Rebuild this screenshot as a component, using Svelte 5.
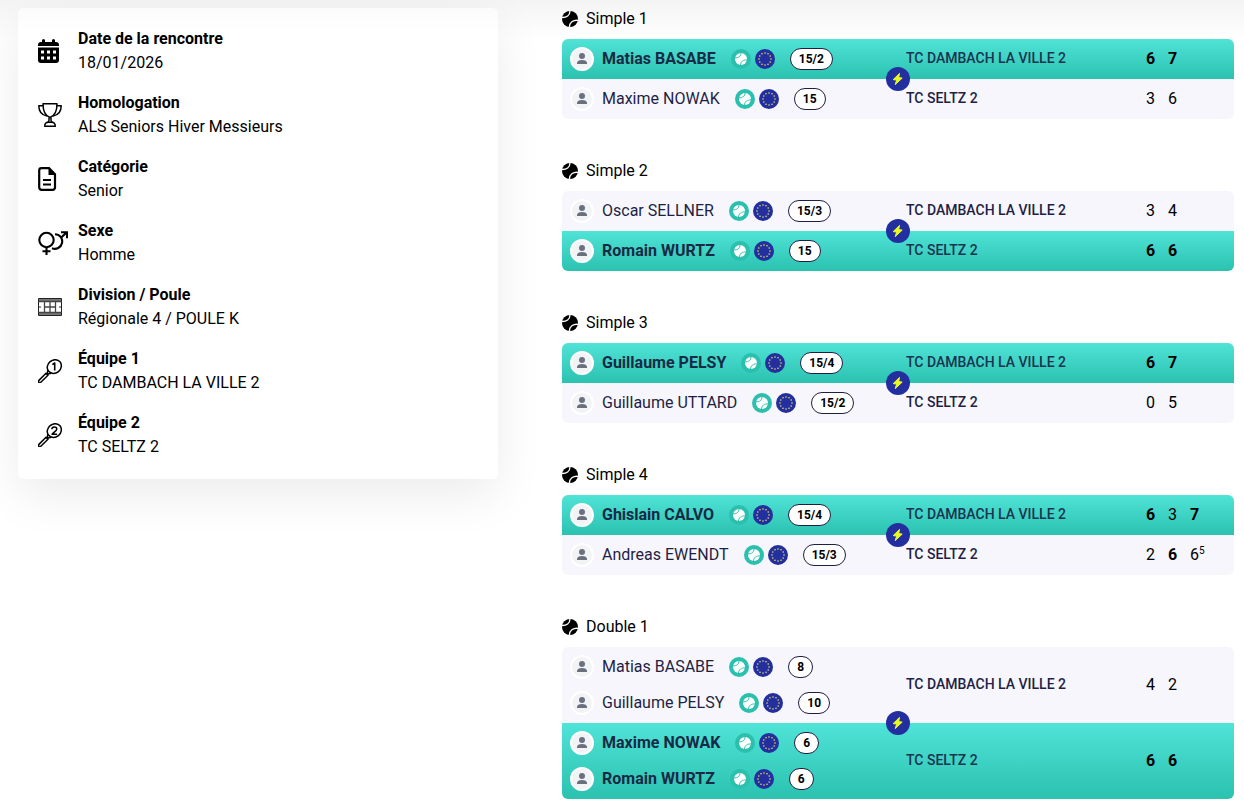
<script>
  const infos = [
    { icon: 'calendar', label: 'Date de la rencontre', value: '18/01/2026' },
    { icon: 'trophy', label: 'Homologation', value: 'ALS Seniors Hiver Messieurs' },
    { icon: 'document', label: 'Catégorie', value: 'Senior' },
    { icon: 'gender', label: 'Sexe', value: 'Homme' },
    { icon: 'court', label: 'Division / Poule', value: 'Régionale 4 / POULE K' },
    { icon: 'racket', number: '1', label: 'Équipe 1', value: 'TC DAMBACH LA VILLE 2' },
    { icon: 'racket', number: '2', label: 'Équipe 2', value: 'TC SELTZ 2' }
  ];

  const home = 'TC DAMBACH LA VILLE 2';
  const away = 'TC SELTZ 2';
  const p = (name, rank) => ({ name, rank });
  const s = (games, won = false, tie = '') => ({ games, won, tie });

  const matches = [
    {
      title: 'Simple 1',
      sides: [
        { team: home, winner: true, players: [p('Matias BASABE', '15/2')], sets: [s(6, true), s(7, true)] },
        { team: away, players: [p('Maxime NOWAK', '15')], sets: [s(3), s(6)] }
      ]
    },
    {
      title: 'Simple 2',
      sides: [
        { team: home, players: [p('Oscar SELLNER', '15/3')], sets: [s(3), s(4)] },
        { team: away, winner: true, players: [p('Romain WURTZ', '15')], sets: [s(6, true), s(6, true)] }
      ]
    },
    {
      title: 'Simple 3',
      sides: [
        { team: home, winner: true, players: [p('Guillaume PELSY', '15/4')], sets: [s(6, true), s(7, true)] },
        { team: away, players: [p('Guillaume UTTARD', '15/2')], sets: [s(0), s(5)] }
      ]
    },
    {
      title: 'Simple 4',
      sides: [
        { team: home, winner: true, players: [p('Ghislain CALVO', '15/4')], sets: [s(6, true), s(3), s(7, true)] },
        { team: away, players: [p('Andreas EWENDT', '15/3')], sets: [s(2), s(6, true), s(6, false, '5')] }
      ]
    },
    {
      title: 'Double 1',
      sides: [
        { team: home, players: [p('Matias BASABE', '8'), p('Guillaume PELSY', '10')], sets: [s(4), s(2)] },
        { team: away, winner: true, players: [p('Maxime NOWAK', '6'), p('Romain WURTZ', '6')], sets: [s(6, true), s(6, true)] }
      ]
    }
  ];

  const stars = Array.from({ length: 12 }, (_, i) => {
    const a = (i * Math.PI) / 6;
    return { x: 10 + 6 * Math.sin(a), y: 10 - 6 * Math.cos(a) };
  });
</script>

{#snippet ball(size, fill, seam)}
  <svg width={size} height={size} viewBox="0 0 16 16" aria-hidden="true">
    <circle cx="8" cy="8" r="8" {fill} />
    <g fill="none" stroke={seam} stroke-width="1.3">
      <path d="M-.2 6.500C4.500 6.700 8 4.500 8 -.2" />
      <path d="M7.400 16.200C7.400 11.500 11 8.800 16.200 9.300" />
    </g>
  </svg>
{/snippet}

{#snippet infoIcon(info)}
  {#if info.icon === 'calendar'}
    <svg width="24" height="24" viewBox="0 0 24 24" aria-hidden="true">
      <path d="M3 3h1V1.500a1.500 1.500 0 0 1 3 0V3h7V1.500a1.500 1.500 0 0 1 3 0V3h1a3 3 0 0 1 3 3v1H0V6a3 3 0 0 1 3-3z" />
      <path fill-rule="evenodd" d="M0 8.500h21V21a3 3 0 0 1-3 3H3a3 3 0 0 1-3-3zM3 11.500v3h3v-3zm6 0v3h3v-3zm6 0v3h3v-3zM3 17.500v3h3v-3zm6 0v3h3v-3zm6 0v3h3v-3z" />
    </svg>
  {:else if info.icon === 'trophy'}
    <svg width="24" height="24" viewBox="0 0 24 24" fill="none" stroke="#000" stroke-width="1.500" stroke-linejoin="round" aria-hidden="true">
      <path d="M5 .8h14c0 7.400-2.400 12.200-7 13.700C7.400 13 5 8.200 5 .8z" />
      <path d="M5 2.700H.8C.8 8.500 3.500 12 9 13M19 2.700h4.200c0 5.800-2.700 9.300-8.200 10.300" />
      <path d="M11 14.500v2.700c0 1-.5 1.700-1.500 2M13 14.500v2.700c0 1 .5 1.700 1.500 2" />
      <path d="M6.700 23.200c0-2.400 1.700-4 3.800-4h3c2.100 0 3.800 1.600 3.800 4z" />
    </svg>
  {:else if info.icon === 'document'}
    <svg width="24" height="24" viewBox="0 0 24 24" aria-hidden="true">
      <path d="M3.500 1.200H11L17 7.200v13.300a2.300 2.300 0 0 1-2.300 2.300H3.500a2.300 2.300 0 0 1-2.300-2.300v-17a2.300 2.300 0 0 1 2.300-2.300z" fill="none" stroke="#000" stroke-width="2.200" />
      <path d="M10.500 1v7H17zM5 12h8v2H5zM5 16.500h8v2H5z" />
    </svg>
  {:else if info.icon === 'gender'}
    <svg width="30" height="24" viewBox="0 0 30 24" fill="none" stroke="#000" stroke-width="2.100" aria-hidden="true">
      <circle cx="8.500" cy="9" r="7.200" />
      <path d="M8.500 16.200V24M4.500 20.300h8" />
      <path d="M17 3.200a7.300 7.300 0 1 1-3 14M23.500 6.300L29 1M23 1.200h6v6" />
    </svg>
  {:else if info.icon === 'court'}
    <svg width="24" height="24" viewBox="0 0 24 24" fill="none" stroke="#222" aria-hidden="true">
      <path d="M1 5h22M1 19h22" stroke="#777" stroke-width="2" />
      <path d="M.5 3.500h23v17H.5z" />
      <path d="M.5 6.500h23M.5 17.500h23M6.500 7v10M17.500 7v10M12 7v10M6.500 12h11" stroke="#444" stroke-width="1.300" />
      <path d="M1 12h2M21 12h2" />
    </svg>
  {:else}
    <svg width="24" height="24" viewBox="0 0 24 24" fill="none" stroke="#000" stroke-width="1.500" stroke-linejoin="round" aria-hidden="true">
      <ellipse cx="16.300" cy="7.600" rx="7.400" ry="6.500" transform="rotate(-40 16.300 7.600)" />
      <path d="M9.700 11.200c.3 1.600-.2 2.800-1.200 4M13.200 14.500c-1.700-.3-3 .2-4.200 1.400M10.300 13.900l-1.600 1.600" />
      <path d="M8 14.200l2 2-7.200 7.100a1.200 1.200 0 0 1-1.900-1.900z" />
      {#if info.number === '1'}
        <path d="M14.400 5.700l2.300-1.700v7.500" stroke-width="1.600" />
      {:else}
        <path d="M13.900 6.200c0-3 4.900-3 4.900-.2 0 1.900-3.200 3.300-4.700 5.300h5" stroke-width="1.500" />
      {/if}
    </svg>
  {/if}
{/snippet}

<main class="page">
  <aside class="card">
    <dl class="infos">
      {#each infos as info}
        <div class="info">
          <span class="info-icon">{@render infoIcon(info)}</span>
          <div>
            <dt>{info.label}</dt>
            <dd>{info.value}</dd>
          </div>
        </div>
      {/each}
    </dl>
  </aside>

  <div class="matches">
    {#each matches as match}
      <section class="match">
        <h2>{@render ball(16, '#000', '#fff')}{match.title}</h2>
        <div class="board">
          {#each match.sides as side, i}
            <div class="side" class:winner={side.winner}>
              <div class="players">
                {#each side.players as player}
                  <div class="player">
                    <svg class="avatar" width="24" height="24" viewBox="0 0 24 24" aria-hidden="true">
                      <circle cx="12" cy="12" r="11" fill="#f2f3f5" stroke="#fff" stroke-width="2" />
                      <circle cx="12" cy="9" r="3" fill="#6a7080" />
                      <path d="M7 17v-1c0-2 2-3 5-3s5 1 5 3v1z" fill="#6a7080" />
                    </svg>
                    <span class="name">{player.name}</span>
                    <span class="badges">
                      <span class="ball-badge">{@render ball(12, '#fff', '#2bbfad')}</span>
                      <svg width="20" height="20" viewBox="0 0 20 20" aria-hidden="true">
                        <circle cx="10" cy="10" r="10" fill="#232f9e" />
                        {#each stars as star}
                          <circle cx={star.x} cy={star.y} r=".8" fill="#e6dc63" />
                        {/each}
                      </svg>
                    </span>
                    <span class="rank">{player.rank}</span>
                  </div>
                {/each}
              </div>
              <div class="team">{side.team}</div>
              <div class="sets">
                {#each side.sets as set}
                  <span class="set" class:won={set.won}>{set.games}{#if set.tie}<sup>{set.tie}</sup>{/if}</span>
                {/each}
              </div>
              {#if i === 1}
                <button class="versus" type="button" aria-label="Face à face">
                  <svg width="24" height="24" viewBox="0 0 24 24" aria-hidden="true">
                    <path d="M13.500 6.400L7.200 12.600l3.500.5-1.500 4.500 7-6.500-3.500-.5z" fill="#e8fb25" stroke="#e8fb25" stroke-linejoin="round" />
                  </svg>
                </button>
              {/if}
            </div>
          {/each}
        </div>
      </section>
    {/each}
  </div>
</main>

<style>
  :global(body) {
    background: linear-gradient(#f4f4f4, #fff 40px) no-repeat #fff;
    color: #000;
    font-family: Roboto, Arial, sans-serif;
    font-size: 16px;
    line-height: 24px;
  }

  .page {
    display: grid;
    grid-template-columns: 5fr 7fr;
    align-items: start;
    gap: 64px;
    padding: 7px 10px 8px 18px;
  }

  .card {
    margin-top: 1px;
    padding: 19px 20px 20px;
    border-radius: 6px;
    background: linear-gradient(#fbfbfb, #fff 24px);
    box-shadow: 0 16px 48px rgba(0, 0, 0, 0.08);
  }

  .infos {
    display: grid;
    gap: 16px;
    margin: 0;
  }

  .info {
    display: flex;
    align-items: center;
    gap: 16px;
  }

  .info-icon {
    display: flex;
    width: 24px;
  }

  .info-icon svg {
    flex: none;
  }

  dt {
    font-weight: 700;
  }

  dd {
    margin: 0;
  }

  .matches {
    display: grid;
    gap: 40px;
  }

  h2 {
    display: flex;
    align-items: center;
    gap: 8px;
    margin: 0 0 8px;
    font-size: 16px;
    font-weight: 400;
  }

  .board {
    border-radius: 6px;
    background: #f6f6fc;
  }

  .side {
    position: relative;
    display: grid;
    grid-template-columns: 6fr 4fr 2fr;
    align-items: center;
    padding: 2px 0;
    color: #1f1f45;
  }

  .side:first-child {
    border-radius: 6px 6px 0 0;
  }

  .side:last-child {
    border-radius: 0 0 6px 6px;
  }

  .winner {
    background: linear-gradient(#50e3d7, #2bc2b0);
  }

  .player {
    display: flex;
    align-items: center;
    height: 36px;
    padding-left: 8px;
  }

  .name {
    margin: 0 15px 0 8px;
  }

  .winner .name {
    color: #182a45;
    font-weight: 700;
  }

  .badges {
    display: flex;
    gap: 4px;
    margin-right: 15px;
  }

  .ball-badge {
    display: grid;
    place-items: center;
    width: 20px;
    height: 20px;
    border-radius: 50%;
    background: #2bbfad;
  }

  .rank {
    padding: 0 8px;
    border: 1px solid #1f1f45;
    border-radius: 11px;
    background: #fff;
    color: #000;
    font-size: 12px;
    font-weight: 700;
    line-height: 20px;
  }

  .team {
    padding: 0 0 2px 8px;
    font-size: 14px;
    font-weight: 500;
  }

  .winner .team {
    color: #1a3450;
  }

  .sets {
    display: flex;
    padding-left: 24px;
    color: #000;
  }

  .set {
    width: 22px;
    white-space: nowrap;
  }

  .won {
    font-weight: 700;
  }

  sup {
    font-size: 10px;
    line-height: 0;
  }

  .versus {
    position: absolute;
    top: -12px;
    left: calc(50% - 12px);
    width: 24px;
    height: 24px;
    padding: 0;
    border: 0;
    border-radius: 50%;
    background: #232f9e;
    cursor: pointer;
  }

  .versus svg {
    display: block;
  }
</style>
